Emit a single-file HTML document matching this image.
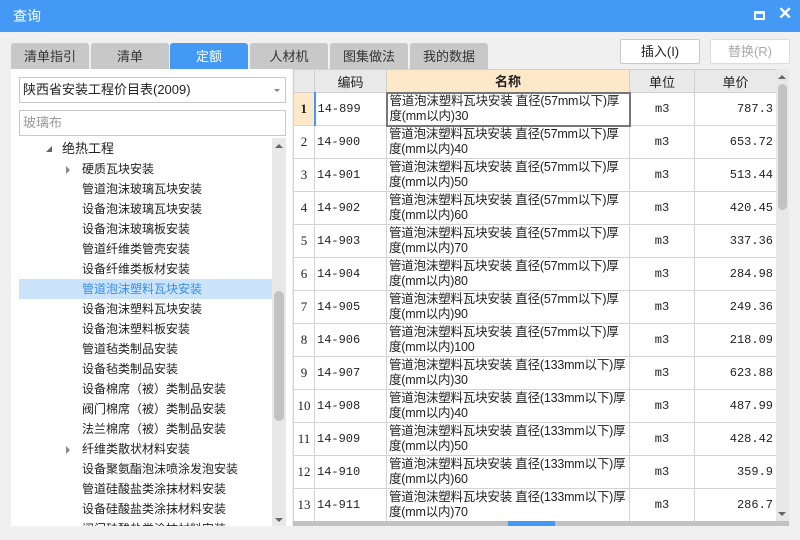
<!DOCTYPE html>
<html><head><meta charset="utf-8"><style>
*{margin:0;padding:0;box-sizing:border-box}
body{width:800px;height:540px;overflow:hidden;background:#f0f0f0;font-family:"Liberation Sans","Microsoft YaHei","Noto Sans CJK SC",sans-serif;font-size:12px;color:#222;position:relative}
.a{position:absolute}
.title{left:0;top:0;width:800px;height:32px;background:#4499f5;color:#fff;font-size:14px;line-height:32px;padding-left:13px}
.frame{left:0;top:0;width:800px;height:540px;border:1px solid #8ab8ee;border-top:none}
.tab{top:43px;height:26px;width:78px;background:#c8c8c8;border-radius:3px 3px 0 0;text-align:center;line-height:27px;font-size:13px;color:#333}
.btn{top:39px;height:25px;width:80px;border:1px solid #c8c8c8;background:#fff;border-radius:2px;text-align:center;line-height:23px;font-size:13px}
.left{left:11px;top:69px;width:281px;height:457px;background:#fff}
.tree div{position:absolute;left:82px;height:20px;line-height:20px;font-size:12px;white-space:nowrap}
.tri{position:absolute;width:0;height:0}
table{border-collapse:collapse;table-layout:fixed;position:absolute;left:293px;top:69px;font-size:12px}
td{border:1px solid #d4d4d4;height:33px;padding:0 2px;vertical-align:middle;overflow:hidden;white-space:nowrap}
th{height:23px;background:#e9e9e9;border:1px solid #d0d0d0;font-weight:normal;font-size:13px}
td.n{text-align:center;font-family:"Liberation Serif",serif;font-size:13px}
td.c{font-family:"Liberation Mono",monospace;font-size:12px}
td.m{white-space:normal;line-height:15px;font-size:12.5px;padding:0 2px;letter-spacing:-0.2px}
td.u{text-align:center;font-family:"Liberation Mono",monospace}
td.p{text-align:right;font-family:"Liberation Mono",monospace;padding-right:3px}
</style></head><body>
<div class="a title">查询</div>
<div class="a" style="left:754px;top:11px;width:11px;height:9px;border:2px solid #fff;border-top-width:3px"></div>
<div class="a" style="left:778px;top:4px;color:#fff;font-size:17px;font-weight:bold">✕</div>
<div class="a tab" style="left:11px">清单指引</div>
<div class="a tab" style="left:91px">清单</div>
<div class="a tab" style="left:170px;background:#4499f5;color:#fff">定额</div>
<div class="a tab" style="left:250px">人材机</div>
<div class="a tab" style="left:330px">图集做法</div>
<div class="a tab" style="left:410px">我的数据</div>
<div class="a btn" style="left:620px">插入(I)</div>
<div class="a btn" style="left:710px;color:#aaa;border-color:#ddd">替换(R)</div>

<div class="a left"></div>
<div class="a" style="left:19px;top:77px;width:267px;height:26px;border:1px solid #c8c8c8;background:#fff;line-height:24px;padding-left:3px;font-size:13px">陕西省安装工程价目表(2009)</div>
<div class="tri" style="left:274px;top:89px;border-left:3px solid transparent;border-right:3px solid transparent;border-top:3px solid #888"></div>
<div class="a" style="left:19px;top:110px;width:267px;height:26px;border:1px solid #c8c8c8;background:#fff;line-height:24px;padding-left:3px;font-size:13px;color:#999">玻璃布</div>
<div class="a" style="left:19px;top:279px;width:253px;height:20px;background:#cce4fb"></div>
<div class="a" style="left:272px;top:138px;width:14px;height:388px;background:#e8e8e8"></div>
<div class="a" style="left:274px;top:291px;width:10px;height:130px;background:#c2c2c2;border-radius:5px"></div>
<div class="tri" style="left:275px;top:144px;border-left:4px solid transparent;border-right:4px solid transparent;border-bottom:4px solid #666"></div>
<div class="tri" style="left:275px;top:518px;border-left:4px solid transparent;border-right:4px solid transparent;border-top:4px solid #666"></div>
<div class="tri" style="left:46px;top:146px;border-left:6px solid transparent;border-bottom:6px solid #666"></div>
<div class="tri" style="left:66px;top:166px;border-top:4px solid transparent;border-bottom:4px solid transparent;border-left:4px solid #888"></div>
<div class="tri" style="left:66px;top:446px;border-top:4px solid transparent;border-bottom:4px solid transparent;border-left:4px solid #888"></div>
<div class="a tree" style="left:0;top:0;width:272px;height:526px;overflow:hidden">
<div style="left:62px;top:139px;font-size:13px">绝热工程</div>
<div style="top:159px">硬质瓦块安装</div>
<div style="top:179px">管道泡沫玻璃瓦块安装</div>
<div style="top:199px">设备泡沫玻璃瓦块安装</div>
<div style="top:219px">设备泡沫玻璃板安装</div>
<div style="top:239px">管道纤维类管壳安装</div>
<div style="top:259px">设备纤维类板材安装</div>
<div style="top:279px;color:#3a8ee6">管道泡沫塑料瓦块安装</div>
<div style="top:299px">设备泡沫塑料瓦块安装</div>
<div style="top:319px">设备泡沫塑料板安装</div>
<div style="top:339px">管道毡类制品安装</div>
<div style="top:359px">设备毡类制品安装</div>
<div style="top:379px">设备棉席（被）类制品安装</div>
<div style="top:399px">阀门棉席（被）类制品安装</div>
<div style="top:419px">法兰棉席（被）类制品安装</div>
<div style="top:439px">纤维类散状材料安装</div>
<div style="top:459px">设备聚氨酯泡沫喷涂发泡安装</div>
<div style="top:479px">管道硅酸盐类涂抹材料安装</div>
<div style="top:499px">设备硅酸盐类涂抹材料安装</div>
<div style="top:519px">阀门硅酸盐类涂抹材料安装</div>
</div>

<div class="a" style="left:293px;top:69px;width:496px;height:457px;background:#fff;overflow:hidden">
<table style="left:0;top:0">
<colgroup><col style="width:21px"><col style="width:72px"><col style="width:243px"><col style="width:65px"><col style="width:82px"></colgroup>
<tr><th></th><th>编码</th><th style="background:#fde8c9;font-weight:bold">名称</th><th>单位</th><th>单价</th></tr>
<tr><td class="n" style="background:#fde8c9;font-weight:bold;border-right:2px solid #4499f5">1</td><td class="c">14-899</td><td class="m" style="border:2px solid #777">管道泡沫塑料瓦块安装 直径(57mm以下)厚度(mm以内)30</td><td class="u">m3</td><td class="p">787.3</td></tr>
<tr><td class="n">2</td><td class="c">14-900</td><td class="m">管道泡沫塑料瓦块安装 直径(57mm以下)厚度(mm以内)40</td><td class="u">m3</td><td class="p">653.72</td></tr>
<tr><td class="n">3</td><td class="c">14-901</td><td class="m">管道泡沫塑料瓦块安装 直径(57mm以下)厚度(mm以内)50</td><td class="u">m3</td><td class="p">513.44</td></tr>
<tr><td class="n">4</td><td class="c">14-902</td><td class="m">管道泡沫塑料瓦块安装 直径(57mm以下)厚度(mm以内)60</td><td class="u">m3</td><td class="p">420.45</td></tr>
<tr><td class="n">5</td><td class="c">14-903</td><td class="m">管道泡沫塑料瓦块安装 直径(57mm以下)厚度(mm以内)70</td><td class="u">m3</td><td class="p">337.36</td></tr>
<tr><td class="n">6</td><td class="c">14-904</td><td class="m">管道泡沫塑料瓦块安装 直径(57mm以下)厚度(mm以内)80</td><td class="u">m3</td><td class="p">284.98</td></tr>
<tr><td class="n">7</td><td class="c">14-905</td><td class="m">管道泡沫塑料瓦块安装 直径(57mm以下)厚度(mm以内)90</td><td class="u">m3</td><td class="p">249.36</td></tr>
<tr><td class="n">8</td><td class="c">14-906</td><td class="m">管道泡沫塑料瓦块安装 直径(57mm以下)厚度(mm以内)100</td><td class="u">m3</td><td class="p">218.09</td></tr>
<tr><td class="n">9</td><td class="c">14-907</td><td class="m">管道泡沫塑料瓦块安装 直径(133mm以下)厚度(mm以内)30</td><td class="u">m3</td><td class="p">623.88</td></tr>
<tr><td class="n">10</td><td class="c">14-908</td><td class="m">管道泡沫塑料瓦块安装 直径(133mm以下)厚度(mm以内)40</td><td class="u">m3</td><td class="p">487.99</td></tr>
<tr><td class="n">11</td><td class="c">14-909</td><td class="m">管道泡沫塑料瓦块安装 直径(133mm以下)厚度(mm以内)50</td><td class="u">m3</td><td class="p">428.42</td></tr>
<tr><td class="n">12</td><td class="c">14-910</td><td class="m">管道泡沫塑料瓦块安装 直径(133mm以下)厚度(mm以内)60</td><td class="u">m3</td><td class="p">359.9</td></tr>
<tr><td class="n">13</td><td class="c">14-911</td><td class="m">管道泡沫塑料瓦块安装 直径(133mm以下)厚度(mm以内)70</td><td class="u">m3</td><td class="p">286.7</td></tr>
</table>
</div>
<div class="a" style="left:776px;top:69px;width:13px;height:452px;background:#e8e8e8"></div>
<div class="a" style="left:778px;top:84px;width:9px;height:126px;background:#c2c2c2;border-radius:5px"></div>
<div class="tri" style="left:778px;top:75px;border-left:4px solid transparent;border-right:4px solid transparent;border-bottom:4px solid #666"></div>
<div class="tri" style="left:778px;top:512px;border-left:4px solid transparent;border-right:4px solid transparent;border-top:4px solid #666"></div>
<div class="a" style="left:293px;top:521px;width:496px;height:5px;background:#c2c2c2"></div>
<div class="a" style="left:508px;top:521px;width:47px;height:5px;background:#4499f5"></div>
</body></html>
